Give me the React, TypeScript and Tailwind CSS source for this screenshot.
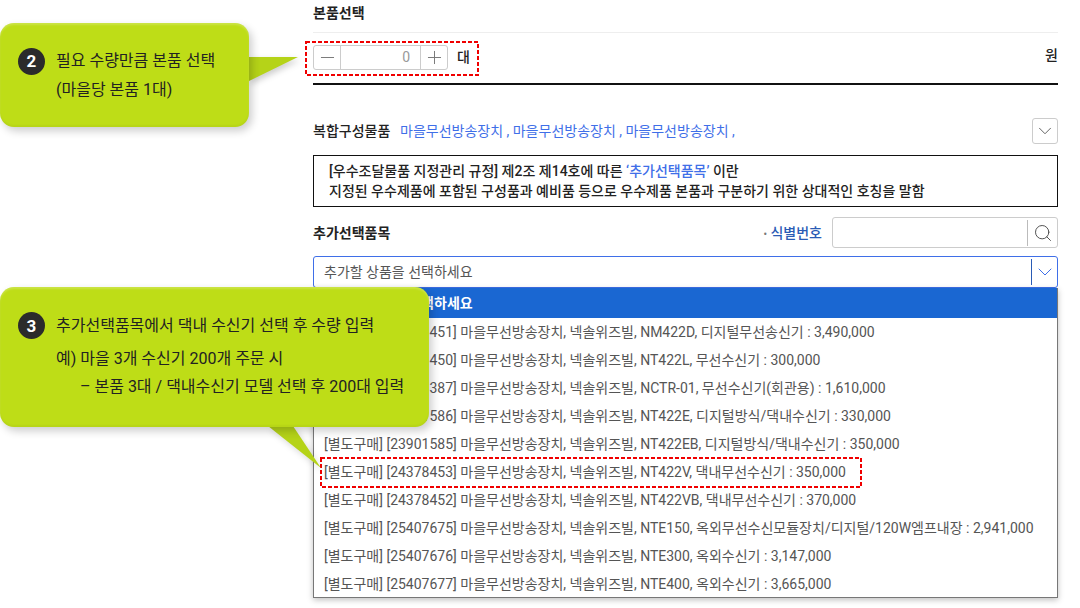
import React from 'react';
import { ChevronDown, Minus, Plus, Search } from 'lucide-react';

const options = [
  '[별도구매] [23901451] 마을무선방송장치, 넥솔위즈빌, NM422D, 디지털무선송신기 : 3,490,000',
  '[별도구매] [23901450] 마을무선방송장치, 넥솔위즈빌, NT422L, 무선수신기 : 300,000',
  '[별도구매] [24378387] 마을무선방송장치, 넥솔위즈빌, NCTR-01, 무선수신기(회관용) : 1,610,000',
  '[별도구매] [23901586] 마을무선방송장치, 넥솔위즈빌, NT422E, 디지털방식/댁내수신기 : 330,000',
  '[별도구매] [23901585] 마을무선방송장치, 넥솔위즈빌, NT422EB, 디지털방식/댁내수신기 : 350,000',
  '[별도구매] [24378453] 마을무선방송장치, 넥솔위즈빌, NT422V, 댁내무선수신기 : 350,000',
  '[별도구매] [24378452] 마을무선방송장치, 넥솔위즈빌, NT422VB, 댁내무선수신기 : 370,000',
  '[별도구매] [25407675] 마을무선방송장치, 넥솔위즈빌, NTE150, 옥외무선수신모듈장치/디지털/120W엠프내장 : 2,941,000',
  '[별도구매] [25407676] 마을무선방송장치, 넥솔위즈빌, NTE300, 옥외수신기 : 3,147,000',
  '[별도구매] [25407677] 마을무선방송장치, 넥솔위즈빌, NTE400, 옥외수신기 : 3,665,000',
];

const StepBadge: React.FC<{ n: number }> = ({ n }) => (
  <span className="flex h-[27px] w-[27px] shrink-0 items-center justify-center rounded-full bg-[#2b2b2b] text-[17px] font-bold text-white">
    {n}
  </span>
);

export default function App() {
  return (
    <div
      className="relative h-[608px] w-[1080px] overflow-hidden bg-white text-[14px] text-[#222]"
      style={{ fontFamily: 'Roboto, "Noto Sans CJK KR", sans-serif' }}
    >
      <div className="ml-[313px] w-[745px]">
        <div className="h-[33px] border-b border-[#eeeeee] pt-[3px] leading-[20px] font-bold">본품선택</div>

        <div className="flex h-[52px] items-center justify-between border-b-2 border-[#111]">
          <div className="mb-[2px] flex items-center">
            <div className="flex h-[25px] w-[135px] items-center rounded-[3px] border border-[#cccccc] text-[#777]">
              <span className="flex h-full w-[27px] items-center justify-center border-r border-[#cccccc]">
                <Minus size={21} strokeWidth={1.1} />
              </span>
              <span className="flex-1 pr-[10px] text-right text-[#999]">0</span>
              <span className="flex h-full w-[27px] items-center justify-center border-l border-[#cccccc]">
                <Plus size={21} strokeWidth={1.1} />
              </span>
            </div>
            <span className="ml-[9px] font-medium">대</span>
          </div>
          <span className="mb-[6px] font-medium">원</span>
        </div>

        <div className="mt-[32px] flex h-[28px] items-center justify-between">
          <div className="flex items-center">
            <span className="w-[87px] font-medium">복합구성물품</span>
            <span className="text-[#3f6fe8]">마을무선방송장치 , 마을무선방송장치 , 마을무선방송장치 ,</span>
          </div>
          <span className="flex h-[26px] w-[26px] items-center justify-center rounded-[3px] border border-[#cccccc] text-[#555]">
            <ChevronDown size={22} strokeWidth={1} />
          </span>
        </div>

        <div className="mt-[10px] h-[52px] border border-[#111] pt-[5px] pl-[15px] leading-[20px] font-medium">
          <p>
            [우수조달물품 지정관리 규정] 제2조 제14호에 따른 <span className="text-[#3f6fe8]">‘추가선택품목’</span> 이란
          </p>
          <p>지정된 우수제품에 포함된 구성품과 예비품 등으로 우수제품 본품과 구분하기 위한 상대적인 호칭을 말함</p>
        </div>

        <div className="mt-[10px] flex h-[31px] items-center justify-between">
          <span className="pt-[1px] font-bold">추가선택품목</span>
          <div className="flex items-center">
            <span className="mr-[10px] pt-[1px] font-medium text-[#2a5bb5]">
              <span className="text-[10px] text-[#777]">•</span> 식별번호
            </span>
            <div className="flex h-[31px] w-[226px] items-center justify-end rounded-[3px] border border-[#cccccc]">
              <span className="flex h-[26px] w-[30px] items-center justify-center border-l border-[#bbbbbb] text-[#444]">
                <Search size={20} strokeWidth={1.1} />
              </span>
            </div>
          </div>
        </div>

        <div className="mt-[8px] flex h-[32px] items-center justify-between rounded-[3px] border border-[#3f6fe8] pl-[10px] text-[#555]">
          <span>추가할 상품을 선택하세요</span>
          <span className="flex h-[26px] w-[26px] items-center justify-center border-l border-[#2a5bb5] text-[#3f6fe8]">
            <ChevronDown size={24} strokeWidth={1} />
          </span>
        </div>

        <div className="h-[310px] border border-t-0 border-[#777] bg-white shadow-[0_2px_6px_rgba(0,0,0,0.25)]">
          <div className="flex h-[30px] items-center bg-[#1a67d2] pt-[1px] pl-[10px] font-bold text-white">추가할 상품을 선택하세요</div>
          {options.map((opt) => (
            <div key={opt} className="flex h-[28px] items-center pl-[10px] text-[#555]">
              {opt}
            </div>
          ))}
        </div>
      </div>

      {/* red dashed highlights */}
      <svg className="absolute top-[41px] left-[305px]" width="174" height="35">
        <rect x="1" y="1" width="172" height="33" fill="none" stroke="#f00000" strokeWidth="2" strokeDasharray="4 2" />
      </svg>
      <svg className="absolute top-[457px] left-[320px]" width="542" height="31">
        <rect x="1" y="1" width="540" height="29" fill="none" stroke="#f00000" strokeWidth="2" strokeDasharray="4 2" />
      </svg>

      {/* callout 2 */}
      <svg className="absolute top-[55px] left-[249px] drop-shadow-[2px_3px_3px_rgba(0,0,0,0.2)]" width="60" height="36">
        <polygon points="0,2 49,2 0,26" fill="#b5d318" />
      </svg>
      <div className="absolute top-[23px] left-0 flex h-[104px] w-[249px] rounded-[14px] bg-[#bedd17] pt-[25px] pl-[18px] text-[16px] leading-[29px] text-[#222] shadow-[inset_0_2px_2px_rgba(255,255,255,0.2),inset_0_-2px_2px_rgba(0,0,0,0.04),3px_4px_8px_rgba(0,0,0,0.2)]">
        <StepBadge n={2} />
        <div className="-mt-[2px] ml-[11px]">
          <p>필요 수량만큼 본품 선택</p>
          <p>(마을당 본품 1대)</p>
        </div>
      </div>

      {/* callout 3 */}
      <svg className="absolute top-[426px] left-[266px] drop-shadow-[2px_3px_3px_rgba(0,0,0,0.15)]" width="64" height="50">
        <polygon points="2,0 27,0 55,42" fill="#b5d318" />
      </svg>
      <div className="absolute top-[287px] left-0 flex h-[140px] w-[429px] rounded-[14px] bg-[#bedd17] pt-[25px] pl-[18px] text-[16px] leading-[28px] text-[#222] shadow-[inset_0_2px_2px_rgba(255,255,255,0.2),inset_0_-2px_2px_rgba(0,0,0,0.04),3px_4px_8px_rgba(0,0,0,0.2)]">
        <StepBadge n={3} />
        <div className="ml-[11px]">
          <p className="mb-[5px]">추가선택품목에서 댁내 수신기 선택 후 수량 입력</p>
          <p>예) 마을 3개 수신기 200개 주문 시</p>
          <p className="pl-[24px]">– 본품 3대 / 댁내수신기 모델 선택 후 200대 입력</p>
        </div>
      </div>
    </div>
  );
}
